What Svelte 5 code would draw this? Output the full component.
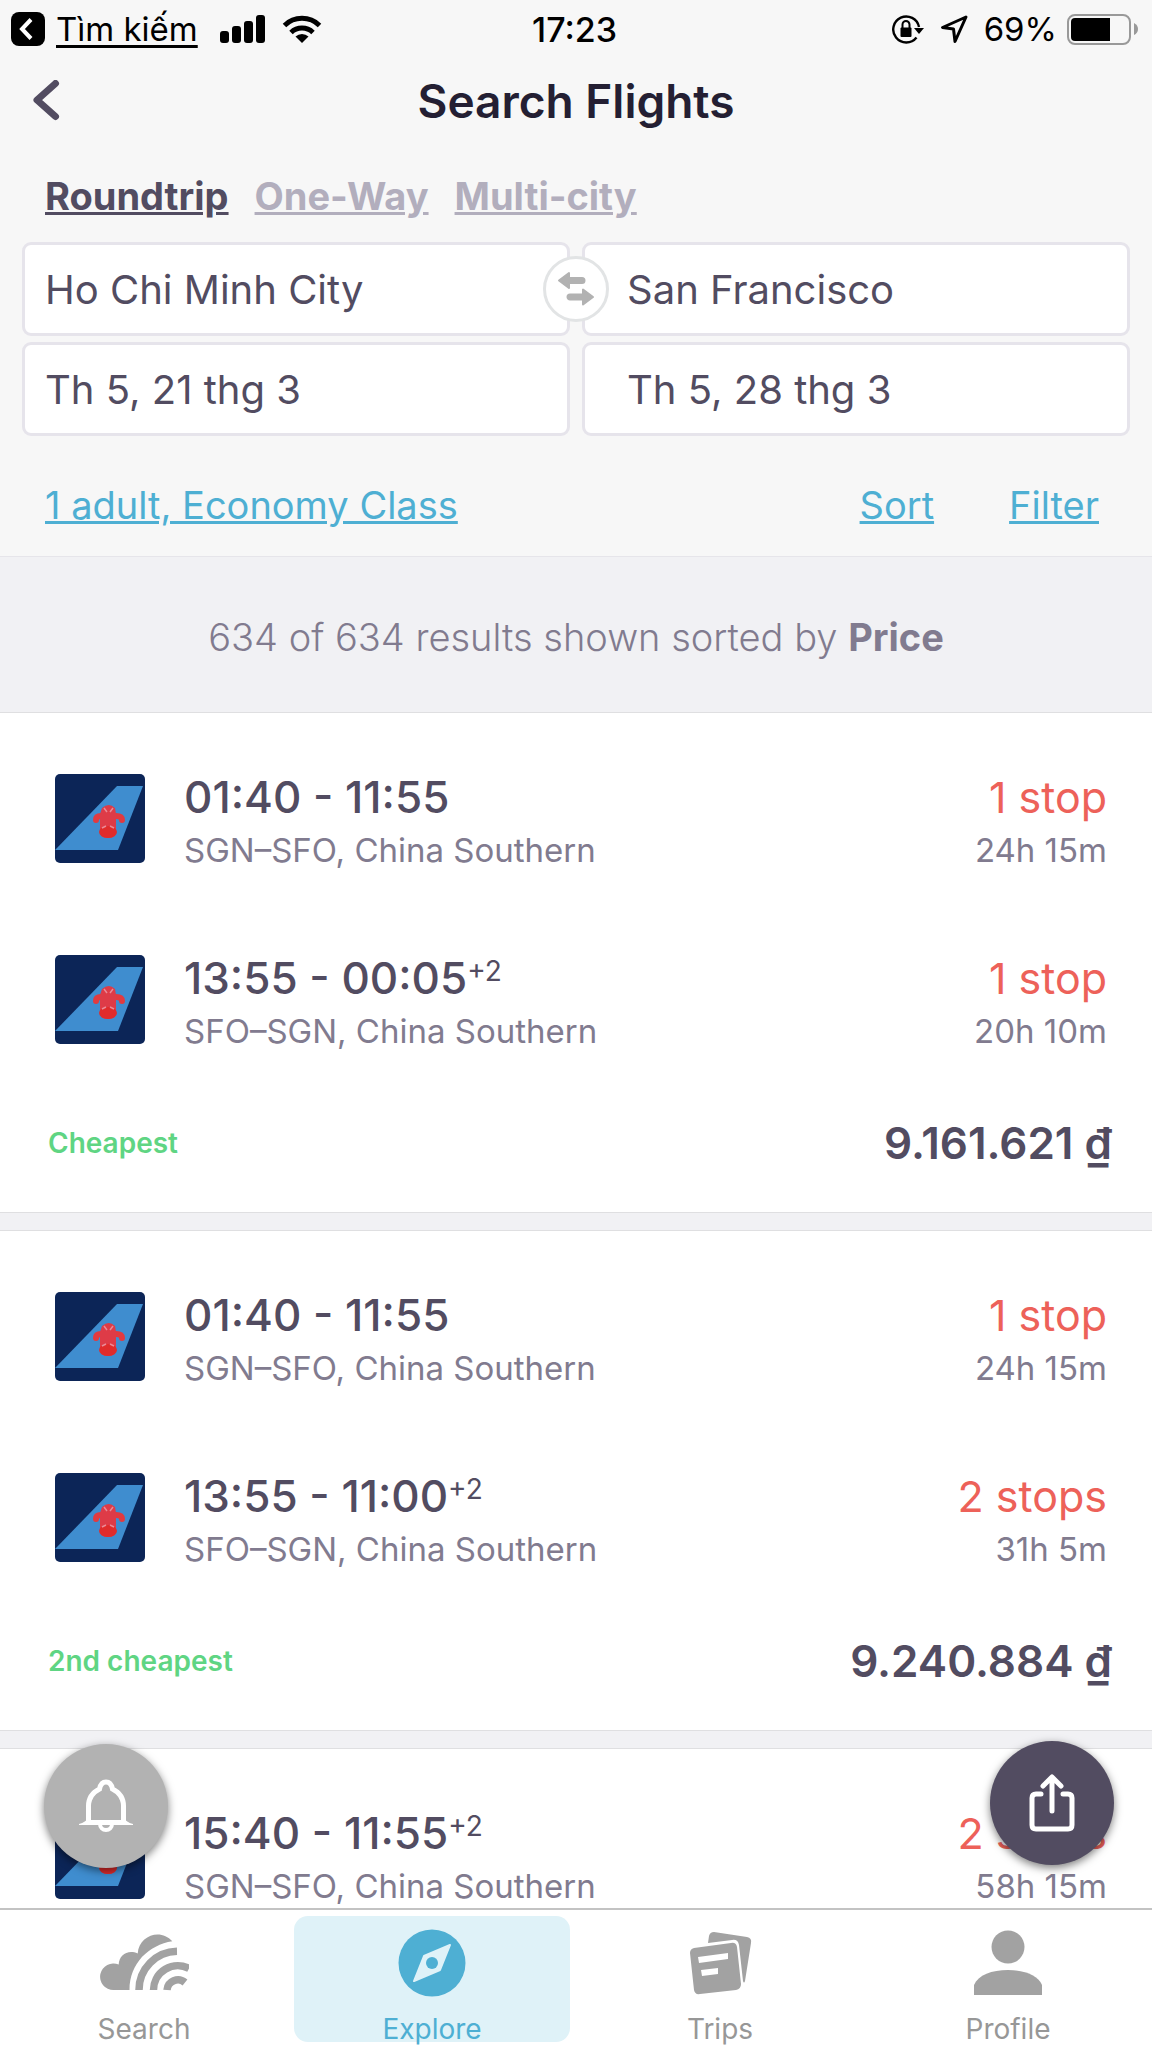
<script>
  let tripType = 'Roundtrip'
  let tripTypes = ['Roundtrip', 'One-Way', 'Multi-city']

  let from = 'Ho Chi Minh City'
  let to = 'San Francisco'
  let departDate = 'Th 5, 21 thg 3'
  let returnDate = 'Th 5, 28 thg 3'

  let activeTab = 'Explore'
  let tabs = ['Search', 'Explore', 'Trips', 'Profile']

  let battery = 69

  let flights = [
    {
      label: 'Cheapest',
      price: '9.161.621',
      legs: [
        { times: '01:40 - 11:55', days: '', route: 'SGN–SFO, China Southern', stops: '1 stop', duration: '24h 15m' },
        { times: '13:55 - 00:05', days: '+2', route: 'SFO–SGN, China Southern', stops: '1 stop', duration: '20h 10m' }
      ]
    },
    {
      label: '2nd cheapest',
      price: '9.240.884',
      legs: [
        { times: '01:40 - 11:55', days: '', route: 'SGN–SFO, China Southern', stops: '1 stop', duration: '24h 15m' },
        { times: '13:55 - 11:00', days: '+2', route: 'SFO–SGN, China Southern', stops: '2 stops', duration: '31h 5m' }
      ]
    },
    {
      label: '',
      price: '',
      legs: [
        { times: '15:40 - 11:55', days: '+2', route: 'SGN–SFO, China Southern', stops: '2 stops', duration: '58h 15m' }
      ]
    }
  ]

  function swapCities() {
    let oldFrom = from
    from = to
    to = oldFrom
  }
</script>

<div class="app">
  <header>
    <div class="status">
      <div class="status-left">
        <svg width="34" height="34" viewBox="0 0 34 34">
          <rect width="34" height="34" rx="8" />
          <path d="M20 7.500L11 17l9 9.500" fill="none" stroke="#fff" stroke-width="4" />
        </svg>
        <a href="#search" class="back-app">Tìm kiếm</a>
        <svg class="signal" width="46" height="30" viewBox="0 0 46 30">
          <rect x="0" y="17" width="9" height="12" rx="3" />
          <rect x="12" y="12" width="9" height="17" rx="3" />
          <rect x="24" y="7" width="9" height="22" rx="3" />
          <rect x="36" y="1" width="9" height="28" rx="3" />
        </svg>
        <svg width="40" height="30" viewBox="0 0 40 30">
          <g fill="none" stroke="#000" stroke-width="5">
            <path d="M2.500 11.500a25 25 0 0 1 35 0" />
            <path d="M9 18.500a16 16 0 0 1 22 0" />
          </g>
          <path d="M13.500 22.500a9.500 9.500 0 0 1 13 0L20 29z" />
        </svg>
      </div>
      <span class="clock">17:23</span>
      <div class="status-right">
        <svg width="32" height="30" viewBox="0 0 32 30">
          <path d="M27 13A13 13 0 1 0 24.500 23.500" fill="none" stroke="#000" stroke-width="2.400" />
          <path d="M22 14h10l-5 6z" />
          <rect x="8.500" y="13.500" width="11" height="9.500" rx="1" />
          <path d="M10.500 14v-3.500a3.500 3.500 0 0 1 7 0V14" fill="none" stroke="#000" stroke-width="2" />
        </svg>
        <svg width="28" height="30" viewBox="0 0 28 30">
          <path d="M26 3L2.500 13.500l11 1.500 1.500 12.500z" fill="none" stroke="#000" stroke-width="3" stroke-linejoin="round" />
        </svg>
        <span class="percent">{battery}%</span>
        <div class="battery"><div class="charge" style="width: {battery}%"></div></div>
        <svg class="battery-tip" width="4" height="12" viewBox="0 0 4 12">
          <path d="M0 0q4 2 4 6t-4 6z" fill="#999" />
        </svg>
      </div>
    </div>

    <div class="title-bar">
      <button class="back" aria-label="Back">
        <svg width="28" height="42" viewBox="0 0 28 42">
          <path d="M23.500 3.500L5 20l18.500 16.500" fill="none" stroke="#524c61" stroke-width="7" stroke-linecap="round" stroke-linejoin="round" />
        </svg>
      </button>
      <h1>Search Flights</h1>
    </div>

    <div class="trip-types">
      {#each tripTypes as type}
        <button class:selected={type === tripType} on:click={() => (tripType = type)}>{type}</button>
      {/each}
    </div>

    <div class="fields">
      <input aria-label="From" bind:value={from} />
      <input aria-label="To" class="right" bind:value={to} />
      <input aria-label="Departure date" bind:value={departDate} />
      <input aria-label="Return date" class="right" bind:value={returnDate} />
      <button class="swap" aria-label="Swap cities" on:click={swapCities}>
        <svg width="38" height="36" viewBox="0 0 38 36">
          <g fill="#b2b2b2" stroke="#b2b2b2" stroke-width="2" stroke-linejoin="round">
            <path d="M2 9.500L12 2v5h13a2.500 2.500 0 0 1 0 5H12v5z" />
            <path d="M36 26L26 18.500v5H13a2.500 2.500 0 0 0 0 5h13v5z" />
          </g>
        </svg>
      </button>
    </div>

    <div class="options">
      <a href="#passengers">1 adult, Economy Class</a>
      <a href="#sort" class="sort">Sort</a>
      <a href="#filter">Filter</a>
    </div>
  </header>

  <main>
    <p class="summary">634 of 634 results shown sorted by <b>Price</b></p>

    {#each flights as flight}
      <section class="card">
        {#each flight.legs as leg}
          <div class="leg">
            <svg class="logo" width="90" height="90" viewBox="0 0 90 90">
              <rect width="90" height="89" rx="5" fill="#0c2557" />
              <path d="M0 76L62 12h26L63 76z" fill="#3f8dcf" />
              <path d="M41 46q0-4 5-4h15q6 0 6 4" fill="none" stroke="#e23a3f" stroke-width="6" stroke-linecap="round" />
              <path d="M47 34q7-6 13 0l1 6v18q0 6-8 6t-8-6V40z" fill="#de3b47" />
              <ellipse cx="53" cy="58" rx="9" ry="6" fill="#e02b2b" />
              <path d="M49 34l3 4m6-4l-3 4m-8 16l4-2m8 2l-4-2" stroke="#e98a96" stroke-width="1.500" />
            </svg>
            <div class="info">
              <div class="times">{leg.times}{#if leg.days}<sup>{leg.days}</sup>{/if}</div>
              <div class="small">{leg.route}</div>
            </div>
            <div class="length">
              <div class="stops">{leg.stops}</div>
              <div class="small">{leg.duration}</div>
            </div>
          </div>
        {/each}
        {#if flight.price}
          <div class="total">
            <span class="label">{flight.label}</span>
            <span class="price">{flight.price} ₫</span>
          </div>
        {/if}
      </section>
    {/each}

    <button class="round alert" aria-label="Price alert">
      <svg width="54" height="54" viewBox="0 0 54 54">
        <g fill="none" stroke="#fff" stroke-width="5">
          <path d="M9.500 43V27c0-9 5-14 11-17 1-5 3.500-7 6.500-7s5.500 2 6.500 7c6 3 11 8 11 17v16" />
          <path d="M21 45a6 6 0 0 0 12 0" stroke-width="4" />
        </g>
        <path d="M0 45q7-2 9-6h36q2 4 9 6v1H0z" fill="#fff" />
        <path d="M12 28q0-8 8-13h14q8 5 8 13v13H12z" fill="#b2b2b2" />
      </svg>
    </button>
    <button class="round share" aria-label="Share">
      <svg width="46" height="58" viewBox="0 0 46 58">
        <g fill="none" stroke="#fff" stroke-width="5" stroke-linecap="round" stroke-linejoin="round">
          <path d="M12 20H7q-4 0-4 4v27q0 4 4 4h32q4 0 4-4V24q0-4-4-4h-5" />
          <path d="M23 37V4M14 12l9-9 9 9" />
        </g>
      </svg>
    </button>
  </main>

  <nav>
    {#each tabs as tab}
      <button class:active={tab === activeTab} on:click={() => (activeTab = tab)}>
        {#if tab === 'Search'}
          <svg width="90" height="68" viewBox="0 0 90 68">
            <path d="M14.500 61a13.300 13.300 0 1 1 5.200-25.500C20 26 29 20 38.700 24.500 40 6 62-1 73.300 12.300 50 16 30.500 34 30.500 61z" />
            <g fill="none" stroke="#a2a2a2" stroke-width="7.500">
              <path d="M40 61A38.700 38.700 0 0 1 78 22.300" />
              <path d="M54.500 61A24.300 24.300 0 0 1 90 39.500" />
              <path d="M68 61A11 11 0 0 1 86 53.500" />
            </g>
          </svg>
        {:else if tab === 'Explore'}
          <svg width="68" height="68" viewBox="0 0 68 68">
            <circle cx="34" cy="34" r="33.500" />
            <path d="M52 16L42 41 16 52l10-25z" fill="#dff2f8" stroke="#dff2f8" stroke-width="2" stroke-linejoin="round" />
            <circle cx="34" cy="34" r="6" />
          </svg>
        {:else if tab === 'Trips'}
          <svg width="64" height="68" viewBox="0 0 64 68">
            <path d="M20 14l1-7q1-4 5-4l33 5q5 1 4 6l-6 38q-1 3-2 0l-4-36q-1-6-7-5z" />
            <path d="M6 19l37-5q5-1 6 4l4 37q0 5-5 6L12 65q-5 1-6-4L2 24q0-4 4-5z" />
            <path d="M10 28l30-4v6l-29 4zM13 41l17-2v6l-16 2z" fill="#fff" />
          </svg>
        {:else}
          <svg width="68" height="68" viewBox="0 0 68 68">
            <circle cx="34" cy="18" r="16.500" />
            <path d="M0 66V56c4-10 18-15 34-15s30 5 34 15v10z" />
          </svg>
        {/if}
        <span>{tab}</span>
      </button>
    {/each}
  </nav>
</div>

<style>
  :global(body) {
    font-family: Inter, "Liberation Sans", sans-serif;
    color: #524c61;
    background: #fff;
  }

  .app {
    height: 100vh;
    display: flex;
    flex-direction: column;
    overflow: hidden;
  }

  button {
    font: inherit;
    color: inherit;
    background: none;
    border: 0;
    padding: 0;
    cursor: pointer;
  }

  svg {
    display: block;
    flex: none;
  }

  header {
    background: #f7f7f7;
    border-bottom: 1px solid #e6e5ea;
  }

  .status {
    height: 58px;
    padding: 0 14px 0 11px;
    display: grid;
    grid-template-columns: 1fr auto 1fr;
    align-items: center;
    font-size: 33px;
    color: #000;
  }

  .status-left, .status-right {
    display: flex;
    align-items: center;
  }

  .back-app {
    color: #000;
    margin: 0 22px 0 11px;
    text-underline-offset: 4px;
  }

  .signal {
    margin-right: 16px;
  }

  .clock {
    font-size: 34px;
    font-weight: 500;
  }

  .status-right {
    justify-content: flex-end;
    gap: 16px;
  }

  .battery {
    width: 56px;
    height: 23px;
    padding: 2px;
    border: 2px solid #999;
    border-radius: 8px;
    margin-left: -6px;
  }

  .battery-tip {
    margin-left: -13px;
  }

  .charge {
    height: 100%;
    background: #000;
    border-radius: 4px 0 0 4px;
  }

  .title-bar {
    height: 86px;
    padding: 0 32px;
    display: grid;
    grid-template-columns: 1fr auto 1fr;
    align-items: center;
  }

  .back {
    justify-self: start;
  }

  h1 {
    margin: 0;
    font-size: 46px;
    font-weight: 600;
    color: #241f33;
  }

  .trip-types {
    padding: 28px 45px 22px;
    display: flex;
    gap: 26px;
  }

  .trip-types button {
    font-size: 38px;
    line-height: 48px;
    font-weight: 700;
    color: #b2aebd;
    text-decoration: underline;
  }

  .trip-types .selected {
    color: #524c61;
  }

  .fields {
    position: relative;
    margin: 0 22px;
    display: grid;
    grid-template-columns: 1fr 1fr;
    gap: 6px 12px;
  }

  input {
    min-width: 0;
    height: 94px;
    box-sizing: border-box;
    padding: 0 20px;
    border: 3px solid #e6e4eb;
    border-radius: 9px;
    background: #fff;
    font: inherit;
    font-size: 40px;
    color: inherit;
  }

  input.right {
    padding-left: 42px;
  }

  .swap {
    position: absolute;
    left: 50%;
    top: 47px;
    width: 66px;
    height: 66px;
    transform: translate(-50%, -50%);
    display: flex;
    align-items: center;
    justify-content: center;
    background: #fff;
    border: 3px solid #e2e4e5;
    border-radius: 50%;
  }

  .options {
    padding: 45px 53px 27px 45px;
    display: flex;
    gap: 75px;
  }

  .options a {
    font-size: 38px;
    line-height: 48px;
    color: #4eafd3;
  }

  .options .sort {
    margin-left: auto;
  }

  main {
    position: relative;
    flex: 1;
    min-height: 0;
    overflow: hidden;
    background: #f1f1f4;
  }

  .summary {
    margin: 0;
    padding: 56px 0 51px;
    text-align: center;
    font-size: 38px;
    line-height: 48px;
    font-weight: 300;
    color: #817b8f;
  }

  .summary b {
    font-weight: 700;
  }

  .card {
    background: #fff;
    border-top: 1px solid #dfdfe1;
    border-bottom: 1px solid #dfdfe1;
    margin-bottom: 17px;
    padding: 61px 45px 0 55px;
  }

  .leg {
    display: flex;
    height: 90px;
    margin-bottom: 91px;
  }

  .info {
    flex: 1;
    margin-left: 39px;
  }

  .length {
    text-align: right;
  }

  .times, .stops {
    font-size: 44px;
    line-height: 46px;
  }

  .times {
    font-weight: 500;
  }

  sup {
    font-size: 28px;
    font-weight: 400;
    line-height: 1;
    vertical-align: 13px;
  }

  .stops {
    font-size: 43px;
    color: #ed6159;
  }

  .small {
    font-size: 33px;
    line-height: 60px;
    color: #817b8f;
  }

  .total {
    height: 58px;
    margin: -22px -5px 0 -7px;
    padding-bottom: 40px;
    display: flex;
    align-items: center;
    justify-content: space-between;
  }

  .label {
    font-size: 28px;
    font-weight: 600;
    color: #5fd583;
  }

  .price {
    font-size: 44px;
    font-weight: 600;
  }

  .round {
    position: absolute;
    width: 124px;
    height: 124px;
    border-radius: 50%;
    display: flex;
    align-items: center;
    justify-content: center;
    box-shadow: 0 3px 8px rgba(0, 0, 0, .5);
  }

  .alert {
    left: 44px;
    bottom: 40px;
    background: #b2b2b2;
  }

  .share {
    right: 38px;
    bottom: 43px;
    background: #524c61;
  }

  nav {
    display: grid;
    grid-template-columns: repeat(4, 1fr);
    padding: 6px 0;
    border-top: 2px solid #c3c3c3;
    background: #fff;
  }

  nav button {
    height: 126px;
    margin: 0 6px;
    padding-top: 13px;
    display: flex;
    flex-direction: column;
    align-items: center;
    border-radius: 14px;
    color: #979797;
    fill: #a2a2a2;
  }

  nav span {
    margin-top: 15px;
    font-size: 28px;
    line-height: 34px;
  }

  nav .active {
    background: #dff2f8;
    color: #4eafd3;
    fill: #4eafd3;
  }
</style>
